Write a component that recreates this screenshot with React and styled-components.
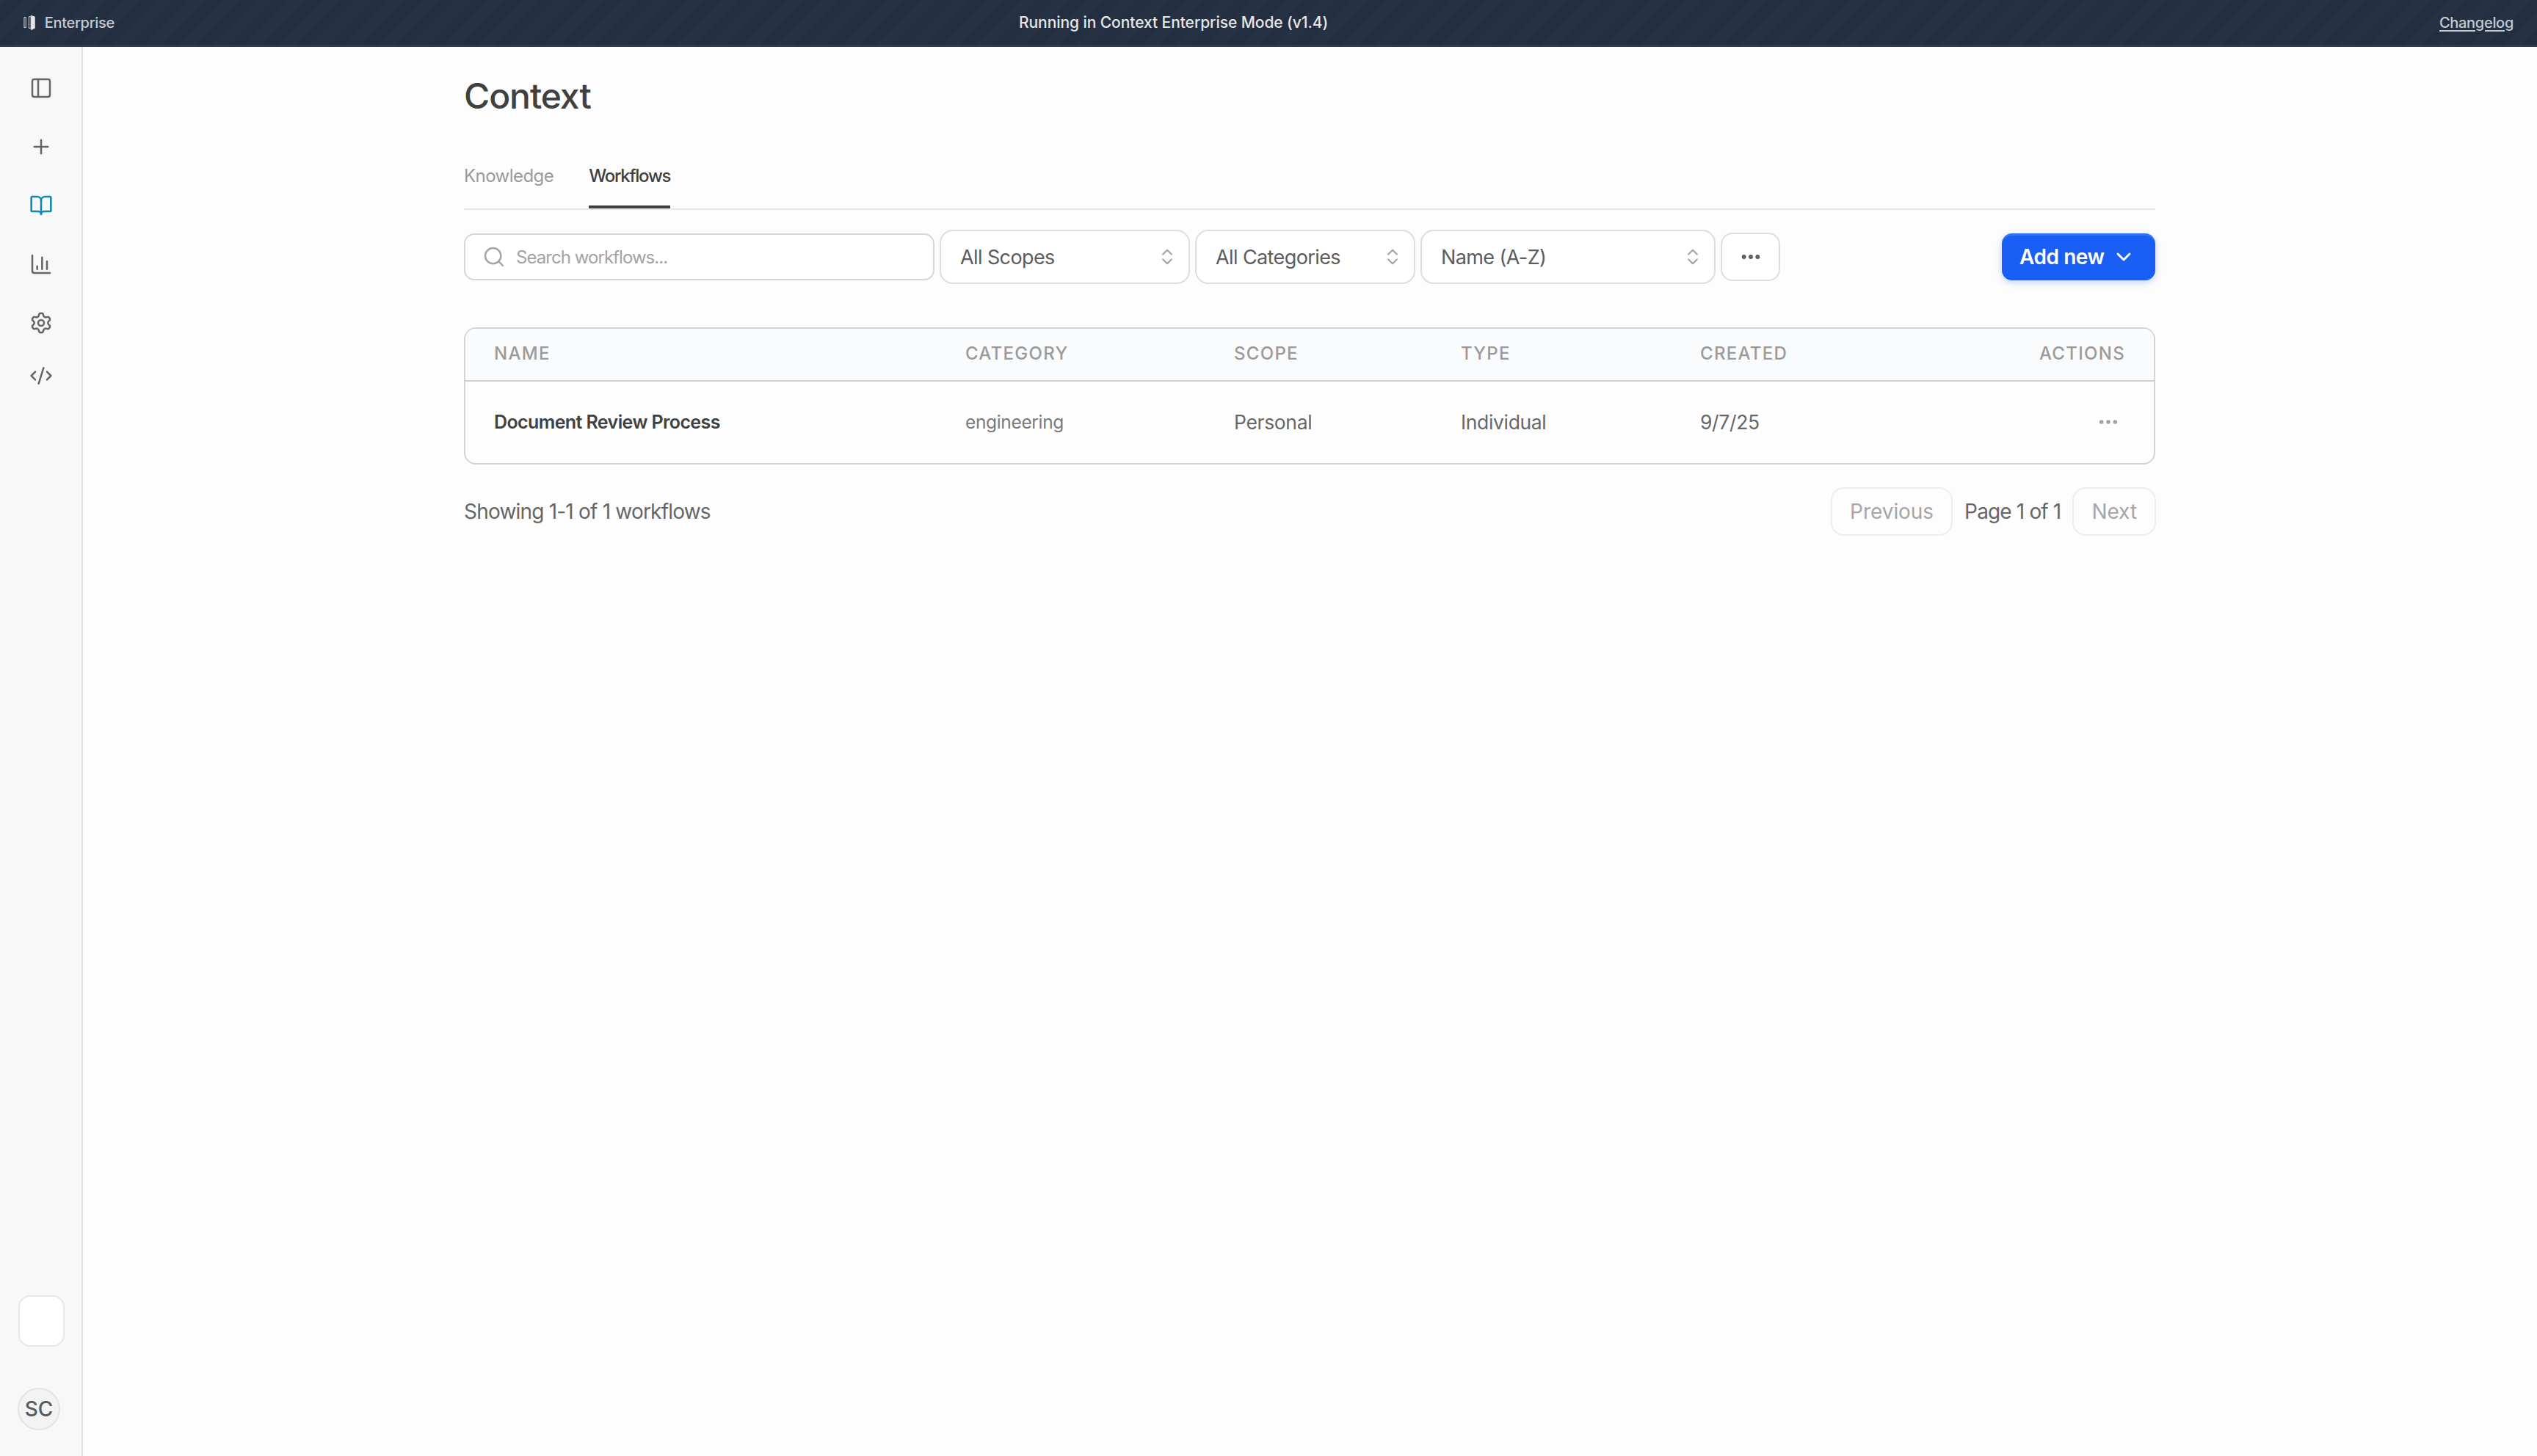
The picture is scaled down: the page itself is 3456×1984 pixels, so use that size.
import React from "react";
import styled, { createGlobalStyle } from "styled-components";
import { PanelLeft, Plus, BookOpen, ChartColumn, Settings, CodeXml, Search, ChevronsUpDown, Ellipsis, ChevronDown } from "lucide-react";

const Global = createGlobalStyle`
  * { box-sizing: border-box; }
  html, body { margin: 0; padding: 0; height: 100%; background: #fdfdfd; }
  body { font-family: Inter, "Liberation Sans", sans-serif; color: #404040; }
  #root { height: 1984px; overflow: hidden; }
`;

const Page = styled.div`
  display: flex;
  flex-direction: column;
  width: 3456px;
  height: 1984px;
`;

const TopBar = styled.header`
  flex: 0 0 64px;
  display: flex;
  align-items: center;
  padding: 0 32px;
  background-color: #232f41;
  background-image: repeating-linear-gradient(-45deg, transparent 0 16px, rgba(255, 255, 255, 0.014) 16px 32px);
  border-bottom: 3px solid #2e3a4d;
  font-size: 20px;
  font-weight: 500;
`;

const Brand = styled.div`
  display: flex;
  align-items: center;
  gap: 12px;
  width: 124px;
  color: #c6cad2;
  letter-spacing: -0.3px;
`;

const Notice = styled.div`
  margin-left: 1232px;
  color: #e5e7eb;
  font-size: 21px;
  letter-spacing: -0.07px;
  white-space: nowrap;
`;

const ChangeLink = styled.a`
  margin-left: auto;
  color: #c6cad2;
  text-decoration: underline;
  text-underline-offset: 3px;
  letter-spacing: -0.3px;
`;

const Body = styled.div`
  flex: 1;
  display: flex;
  min-height: 0;
`;

const Sidebar = styled.aside`
  flex: 0 0 113px;
  display: flex;
  flex-direction: column;
  padding: 16px 0 35px;
  background: #f8f8f8;
  border-right: 2px solid #e3e3e3;
`;

const NavItem = styled.div`
  flex: 0 0 ${(p) => p.$h || 80}px;
  display: flex;
  align-items: center;
  justify-content: center;
  color: ${(p) => (p.$active ? "#0b88b4" : "#666666")};
`;

const BlankTile = styled.div`
  align-self: flex-start;
  width: 63px;
  height: 70px;
  margin: auto 0 56px 25px;
  background: #ffffff;
  border: 2px solid #e6e6eb;
  border-radius: 16px;
`;

const Avatar = styled.div`
  align-self: flex-start;
  width: 58px;
  height: 58px;
  margin-left: 24px;
  display: flex;
  align-items: center;
  justify-content: center;
  background: #f3f3f3;
  border: 2px solid #e3e3e3;
  border-radius: 50%;
  color: #5a5a5a;
  font-size: 28px;
  font-weight: 500;
`;

const Main = styled.main`
  flex: 1;
  padding: 39px 1px 0 0;
  background: #fdfdfd;
`;

const Content = styled.div`
  width: 2304px;
  margin: 0 auto;
`;

const Title = styled.h1`
  margin: 0;
  height: 56px;
  font-size: 48px;
  line-height: 56px;
  font-weight: 450;
  letter-spacing: -1.05px;
  color: #404040;
`;

const Tabs = styled.nav`
  display: flex;
  gap: 48px;
  margin-top: 53px;
  border-bottom: 2px solid #e6e6eb;
`;

const Tab = styled.div`
  height: 72px;
  padding-top: 14px;
  font-size: 24px;
  line-height: 28px;
  font-weight: ${(p) => (p.$active ? 500 : 400)};
  letter-spacing: ${(p) => (p.$active ? -1.28 : -0.55)}px;
  color: ${(p) => (p.$active ? "#404040" : "#9a9a9a")};
  border-bottom: 4px solid ${(p) => (p.$active ? "#404040" : "transparent")};
`;

const Toolbar = styled.div`
  display: flex;
  align-items: center;
  gap: 7px;
  height: 74px;
  margin-top: 27px;
`;

const SearchBox = styled.div`
  flex: 0 0 641px;
  display: flex;
  align-items: center;
  gap: 14px;
  height: 64px;
  padding: 0 23px;
  background: #ffffff;
  border: 2px solid #d6d6d6;
  border-radius: 14px;
  font-size: 24px;
  letter-spacing: -0.95px;
  color: #a3a3a3;
`;

const SelectBox = styled.div`
  flex: 0 0 ${(p) => p.$w}px;
  display: flex;
  align-items: center;
  justify-content: space-between;
  height: 74px;
  padding: 0 15px 0 26px;
  background: #ffffff;
  border: 2px solid #dedede;
  border-radius: 18px;
  font-size: 27px;
  letter-spacing: -0.6px;
  color: #5c5c5c;
  svg { color: #a3a3a3; }
`;

const IconBox = styled.div`
  flex: 0 0 81px;
  display: flex;
  align-items: center;
  justify-content: center;
  height: 66px;
  background: #ffffff;
  border: 2px solid #dedede;
  border-radius: 16px;
  color: #5c5c5c;
`;

const AddButton = styled.button`
  margin-left: auto;
  display: flex;
  align-items: center;
  gap: 10px;
  width: 209px;
  height: 64px;
  padding: 0 24px;
  border: 0;
  border-radius: 14px;
  background: #195ff5;
  box-shadow: inset 0 3px 0 rgba(255, 255, 255, 0.12), 0 3px 10px rgba(25, 95, 245, 0.28);
  color: #ffffff;
  font-family: inherit;
  font-size: 28px;
  font-weight: 600;
  letter-spacing: -0.45px;
  white-space: nowrap;
`;

const Table = styled.section`
  margin-top: 59px;
  background: #fefefe;
  border: 2px solid #d4d4d4;
  border-radius: 16px;
  overflow: hidden;
`;

const HeadRow = styled.div`
  display: grid;
  grid-template-columns: 642px 366px 309px 326px 1fr;
  align-items: center;
  height: 72px;
  padding: 0 39px 3px 39px;
  background: #fafbfc;
  border-bottom: 2px solid #d0d0d0;
`;

const DataRow = styled(HeadRow)`
  height: 111px;
  background: transparent;
  border-bottom: 0;
  padding-bottom: 1px;
`;

const HeadCell = styled.div`
  font-size: 24px;
  font-weight: 500;
  letter-spacing: 1.3px;
  color: #9a9a9a;
`;

const NameCell = styled.div`
  font-size: 25px;
  font-weight: 600;
  letter-spacing: -0.6px;
  color: #404040;
`;

const TextCell = styled.div`
  font-size: ${(p) => (p.$small ? 24.5 : 26.5)}px;
  letter-spacing: -0.35px;
  color: ${(p) => (p.$small ? "#7a7a7a" : "#666666")};
`;

const SplitCell = styled.div`
  display: flex;
  align-items: center;
  justify-content: space-between;
`;

const RowAction = styled.div`
  display: flex;
  justify-content: flex-end;
  padding-right: 7px;
  color: #a3a3a3;
`;

const Footer = styled.div`
  display: flex;
  align-items: center;
  justify-content: space-between;
  margin-top: 31px;
`;

const Summary = styled.div`
  font-size: 28px;
  letter-spacing: -0.8px;
  color: #666666;
`;

const Pager = styled.div`
  display: flex;
  align-items: center;
  gap: 16px;
  margin-right: -1px;
`;

const PageButton = styled.div`
  height: 66px;
  display: flex;
  align-items: center;
  padding: 0 24px;
  border: 2px solid #eeeeee;
  border-radius: 18px;
  font-size: 28px;
  letter-spacing: -0.05px;
  color: #a6a6a6;
`;

const PageLabel = styled.div`
  font-size: 28px;
  letter-spacing: -0.85px;
  color: #666666;
`;

const EnterpriseMark = () => (
  <svg width="18" height="24" viewBox="0 0 18 24" fill="none">
    <path d="M1 4v15M3.5 4v15M8 3v17M11 3v17" stroke="#e5e7eb" strokeWidth="1" />
    <path d="M1 4h2.5M1 19h2.5M8 3h3M8 20h3" stroke="#e5e7eb" strokeWidth="1" />
    <path d="M11 1l6 2v17l-6 3z" fill="#e5e7eb" />
  </svg>
);

const navIcons = [
  { Icon: PanelLeft },
  { Icon: Plus },
  { Icon: BookOpen, active: true },
  { Icon: ChartColumn },
  { Icon: Settings },
  { Icon: CodeXml, h: 64 },
];

export default function App() {
  return (
    <Page>
      <Global />
      <TopBar>
        <Brand>
          <EnterpriseMark />
          <span>Enterprise</span>
        </Brand>
        <Notice>Running in Context Enterprise Mode (v1.4)</Notice>
        <ChangeLink>Changelog</ChangeLink>
      </TopBar>
      <Body>
        <Sidebar>
          {navIcons.map(({ Icon, active, h }, i) => (
            <NavItem key={i} $active={active} $h={h}>
              <Icon size={32} strokeWidth={1.9} />
            </NavItem>
          ))}
          <BlankTile />
          <Avatar>SC</Avatar>
        </Sidebar>
        <Main>
          <Content>
            <Title>Context</Title>
            <Tabs>
              <Tab>Knowledge</Tab>
              <Tab $active>Workflows</Tab>
            </Tabs>
            <Toolbar>
              <SearchBox>
                <Search size={32} strokeWidth={1.8} />
                <span>Search workflows...</span>
              </SearchBox>
              <SelectBox $w={341}>
                <span>All Scopes</span>
                <ChevronsUpDown size={28} strokeWidth={1.9} />
              </SelectBox>
              <SelectBox $w={300}>
                <span>All Categories</span>
                <ChevronsUpDown size={28} strokeWidth={1.9} />
              </SelectBox>
              <SelectBox $w={402}>
                <span>Name (A-Z)</span>
                <ChevronsUpDown size={28} strokeWidth={1.9} />
              </SelectBox>
              <IconBox>
                <Ellipsis size={32} strokeWidth={2.4} />
              </IconBox>
              <AddButton>
                <span>Add new</span>
                <ChevronDown size={32} strokeWidth={2.2} />
              </AddButton>
            </Toolbar>
            <Table>
              <HeadRow>
                <HeadCell>NAME</HeadCell>
                <HeadCell>CATEGORY</HeadCell>
                <HeadCell>SCOPE</HeadCell>
                <HeadCell>TYPE</HeadCell>
                <SplitCell>
                  <HeadCell>CREATED</HeadCell>
                  <HeadCell>ACTIONS</HeadCell>
                </SplitCell>
              </HeadRow>
              <DataRow>
                <NameCell>Document Review Process</NameCell>
                <TextCell $small>engineering</TextCell>
                <TextCell>Personal</TextCell>
                <TextCell>Individual</TextCell>
                <SplitCell>
                  <TextCell>9/7/25</TextCell>
                  <RowAction>
                    <Ellipsis size={32} strokeWidth={2.2} />
                  </RowAction>
                </SplitCell>
              </DataRow>
            </Table>
            <Footer>
              <Summary>Showing 1-1 of 1 workflows</Summary>
              <Pager>
                <PageButton>Previous</PageButton>
                <PageLabel>Page 1 of 1</PageLabel>
                <PageButton>Next</PageButton>
              </Pager>
            </Footer>
          </Content>
        </Main>
      </Body>
    </Page>
  );
}
